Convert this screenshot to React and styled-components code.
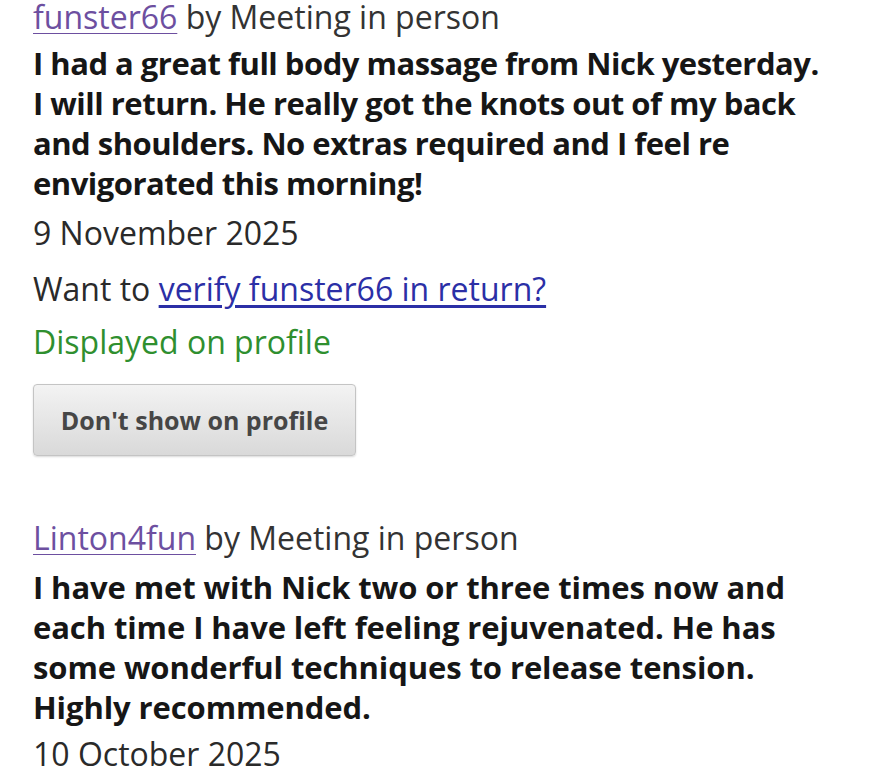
import React from "react"
import styled, { createGlobalStyle } from "styled-components"

const GlobalStyle = createGlobalStyle`
  body {
    margin: 0;
    background: #ffffff;
    font-family: "Open Sans", "Noto Sans", sans-serif;
    color: #1e1e1e;
  }
`

const Page = styled.div`
  padding: 0 0 0 33px;
  width: 872px;
  height: 768px;
  overflow: hidden;
  box-sizing: border-box;
`

const Review = styled.div`
  display: flex;
  flex-direction: column;
  align-items: flex-start;
  margin-top: ${(p) => p.$top}px;
`

const Header = styled.div`
  font-size: 32px;
  line-height: 34px;
  color: #333;
  white-space: nowrap;
`

const UserLink = styled.a`
  color: #6d4fa0;
  text-decoration: underline;
  text-decoration-thickness: 1px;
  text-underline-offset: 4px;
`

const Body = styled.p`
  margin: ${(p) => p.$gap}px 0 0;
  font-size: 31px;
  font-weight: 700;
  line-height: 40px;
  color: #161616;
  letter-spacing: ${(p) => p.$spacing}px;
`

const Line = styled.span`
  display: block;
  white-space: nowrap;
`

const Meta = styled.div`
  font-size: 32px;
  line-height: 36px;
  margin-top: ${(p) => p.$gap}px;
  color: ${(p) => p.$color || "#2a2a2a"};
  white-space: nowrap;
`

const VerifyLink = styled.a`
  color: #2b2fa6;
  text-decoration: underline;
  text-underline-offset: 4px;
`

const HideButton = styled.button`
  margin-top: 24px;
  width: 323px;
  height: 72px;
  border: 1px solid #c4c4c4;
  border-radius: 4px;
  background: linear-gradient(#f3f3f3, #d9d9d9);
  box-shadow: 0 1px 2px rgba(0, 0, 0, 0.15);
  font-family: "Open Sans", "Noto Sans", sans-serif;
  font-size: 25px;
  font-weight: 700;
  color: #464646;
`

const App = () => {
  return (
    <Page>
      <GlobalStyle />
      <Review $top={0}>
        <Header>
          <UserLink>funster66</UserLink> by Meeting in person
        </Header>
        <Body $gap={9} $spacing={-0.5}>
          <Line>I had a great full body massage from Nick yesterday.</Line>
          <Line>I will return. He really got the knots out of my back</Line>
          <Line>and shoulders. No extras required and I feel re</Line>
          <Line>envigorated this morning!</Line>
        </Body>
        <Meta $gap={12}>9 November 2025</Meta>
        <Meta $gap={20}>
          Want to <VerifyLink>verify funster66 in return?</VerifyLink>
        </Meta>
        <Meta $gap={17} $color="#2f8f2f">Displayed on profile</Meta>
        <HideButton>Don't show on profile</HideButton>
      </Review>
      <Review $top={65}>
        <Header>
          <UserLink>Linton4fun</UserLink> by Meeting in person
        </Header>
        <Body $gap={12} $spacing={-0.1}>
          <Line>I have met with Nick two or three times now and</Line>
          <Line>each time I have left feeling rejuvenated. He has</Line>
          <Line>some wonderful techniques to release tension.</Line>
          <Line>Highly recommended.</Line>
        </Body>
        <Meta $gap={9}>10 October 2025</Meta>
      </Review>
    </Page>
  )
}

export default App
